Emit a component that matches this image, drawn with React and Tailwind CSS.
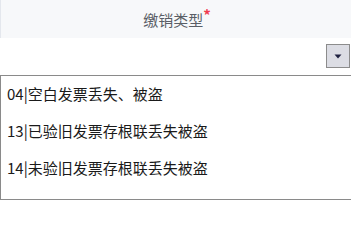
export default function App() {
  const items = [
    "04|空白发票丢失、被盗",
    "13|已验旧发票存根联丢失被盗",
    "14|未验旧发票存根联丢失被盗",
  ];
  return (
    <div
      className="w-[351px] h-[200px] bg-white overflow-hidden"
      style={{ fontFamily: '"Microsoft YaHei", "Noto Sans CJK SC", "Noto Sans", sans-serif' }}
    >
      <div className="h-[38px] bg-[#f7f8fa] border-l border-[#e4e7ed] flex items-center justify-center">
        <span className="text-[15px] text-[#5a5e66] leading-none pl-[2px]">缴销类型</span>
        <span className="self-start mt-[7px] text-[15px] font-bold text-[#f03c50] leading-none">*</span>
      </div>
      <div className="h-[37px] flex items-center justify-end pr-[1px]">
        <div className="w-[24px] h-[24px] mt-[-1px] bg-[#dcdde4] border border-[#8c8c8c] flex items-center justify-center">
          <svg width="8" height="5" viewBox="0 0 8 5">
            <path d="M0.5 0.5 H7.5 L4 4.5 Z" fill="#1e2140" />
          </svg>
        </div>
      </div>
      <div className="h-[125px] border border-[#8a8a8a] border-r-0">
        {items.map((t) => (
          <div key={t} className="h-[37px] flex items-center pl-[6px] text-[15px] text-[#1a1a1a]">
            {t}
          </div>
        ))}
      </div>
    </div>
  );
}
